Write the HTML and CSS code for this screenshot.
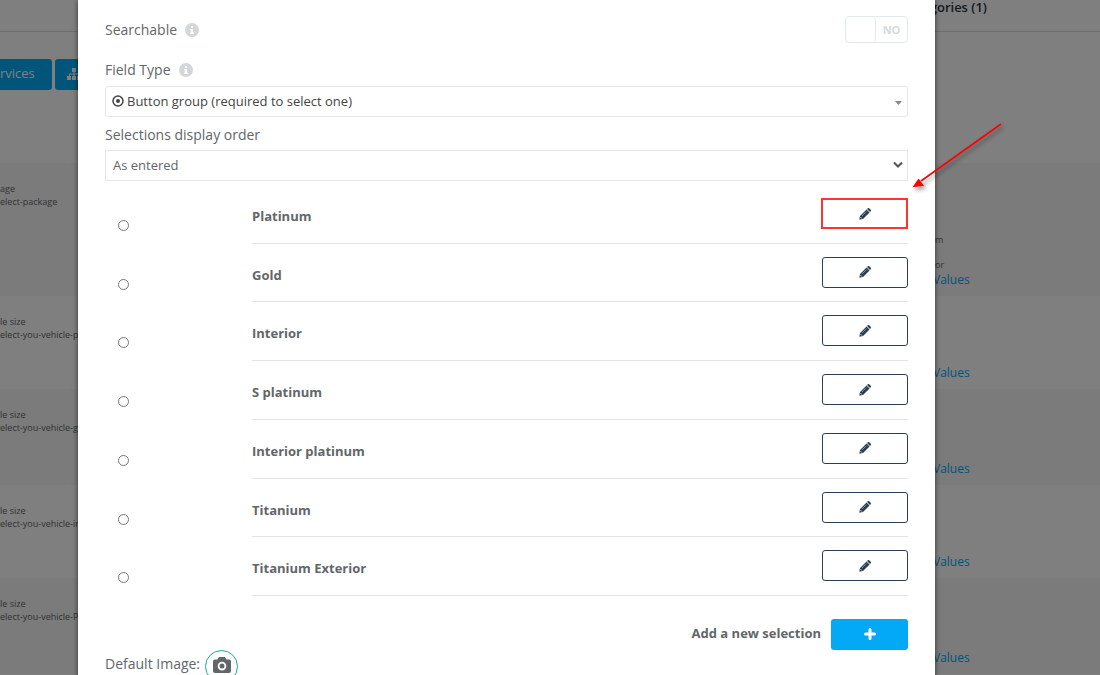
FILE: index.html
```
<!DOCTYPE html>
<html lang="en">
<head>
    <meta charset="UTF-8">
    <meta name="viewport" content="width=device-width, initial-scale=1.0">
    <title>Edit field</title>
    <link rel="stylesheet" href="styles.css">
</head>
<body>
    <svg class="sprite" aria-hidden="true">
        <symbol id="info" viewBox="0 0 14 14">
            <circle cx="7" cy="7" r="7" fill="#d3d7da"/>
            <path d="M6 3h2v2H6zM5 6h3v3.500h1V11H5V9.500h1v-2H5z" fill="#fff"/>
        </symbol>
        <symbol id="pencil" viewBox="0 0 12 12">
            <path d="M8 1 8.800.300q.700-.600 1.400 0l1.500 1.500q.600.700 0 1.400L11 4zM7.500 1.500l3 3L4 11 .300 11.700 1 8z" fill="#2c3e50"/>
            <path d="M3 7.900 7.200 3.700" stroke="#c9ced6" stroke-width=".6" fill="none"/>
            <path d="M1.500 9.200l1.300 1.300" stroke="#fff" stroke-width=".9" fill="none"/>
        </symbol>
    </svg>

    <div class="page">
        <header class="page-header"><span class="page-title">gories (1)</span></header>
        <div class="toolbar">
            <button type="button" class="tool services">rvices</button>
            <button type="button" class="tool" aria-label="Categories">
                <svg width="14" height="12" viewBox="0 0 14 12" fill="#fff"><path d="M5 0h4v4H7.600v1.500H12V8h2v4h-4V8h1V6.500H7.600V8H9v4H5V8h1.400V6.500H3V8h1v4H0V8h2V5.500h4.400V4H5z"/></svg>
            </button>
        </div>
        <div class="records">
            <div class="record tall">
                <p class="name">age<br>elect-package</p>
                <p class="values"><span>m</span><span>or</span><a href="#">Values</a></p>
            </div>
            <div class="record">
                <p class="name">le size<br>elect-you-vehicle-pl</p>
                <p class="values"><a href="#">Values</a></p>
            </div>
            <div class="record">
                <p class="name">le size<br>elect-you-vehicle-gr</p>
                <p class="values"><a href="#">Values</a></p>
            </div>
            <div class="record">
                <p class="name">le size<br>elect-you-vehicle-in</p>
                <p class="values"><a href="#">Values</a></p>
            </div>
            <div class="record">
                <p class="name">le size<br>elect-you-vehicle-Pl</p>
                <p class="values"><a href="#">Values</a></p>
            </div>
        </div>
    </div>

    <div class="overlay">
        <form class="modal">
            <div class="switch-row">
                <label for="searchable">Searchable</label>
                <svg class="info"><use href="#info"/></svg>
                <label class="switch">
                    <input type="checkbox" id="searchable">
                    <span class="knob"></span>
                    <span class="state">NO</span>
                </label>
            </div>

            <div class="field-label first">
                <label for="field-type">Field Type</label>
                <svg class="info"><use href="#info"/></svg>
            </div>
            <div class="select-box">
                <svg class="type-icon" viewBox="0 0 12 12"><circle cx="6" cy="6" r="5" fill="none" stroke="#444" stroke-width="1.500"/><circle cx="6" cy="6" r="2" fill="#444"/></svg>
                <select id="field-type" class="type-select">
                    <option>Button group (required to select one)</option>
                </select>
                <svg class="caret" viewBox="0 0 10 10"><path d="M2 4h7L5.500 8z" fill="#888"/></svg>
            </div>

            <div class="field-label">
                <label for="order">Selections display order</label>
            </div>
            <div class="select-box">
                <select id="order" class="order-select">
                    <option>As entered</option>
                </select>
                <svg class="caret" viewBox="0 0 10 10"><path d="M1 1.500 5 5.500l4-4" fill="none" stroke="#555" stroke-width="2"/></svg>
            </div>

            <div class="selections">
                <div class="selection">
                    <input type="radio" name="selection" id="s1">
                    <div class="selection-body">
                        <label for="s1">Platinum</label>
                        <button type="button" class="edit marked" aria-label="Edit Platinum"><svg><use href="#pencil"/></svg></button>
                    </div>
                </div>
                <div class="selection">
                    <input type="radio" name="selection" id="s2">
                    <div class="selection-body">
                        <label for="s2">Gold</label>
                        <button type="button" class="edit" aria-label="Edit Gold"><svg><use href="#pencil"/></svg></button>
                    </div>
                </div>
                <div class="selection">
                    <input type="radio" name="selection" id="s3">
                    <div class="selection-body">
                        <label for="s3">Interior</label>
                        <button type="button" class="edit" aria-label="Edit Interior"><svg><use href="#pencil"/></svg></button>
                    </div>
                </div>
                <div class="selection">
                    <input type="radio" name="selection" id="s4">
                    <div class="selection-body">
                        <label for="s4">S platinum</label>
                        <button type="button" class="edit" aria-label="Edit S platinum"><svg><use href="#pencil"/></svg></button>
                    </div>
                </div>
                <div class="selection">
                    <input type="radio" name="selection" id="s5">
                    <div class="selection-body">
                        <label for="s5">Interior platinum</label>
                        <button type="button" class="edit" aria-label="Edit Interior platinum"><svg><use href="#pencil"/></svg></button>
                    </div>
                </div>
                <div class="selection">
                    <input type="radio" name="selection" id="s6">
                    <div class="selection-body">
                        <label for="s6">Titanium</label>
                        <button type="button" class="edit" aria-label="Edit Titanium"><svg><use href="#pencil"/></svg></button>
                    </div>
                </div>
                <div class="selection">
                    <input type="radio" name="selection" id="s7">
                    <div class="selection-body">
                        <label for="s7">Titanium Exterior</label>
                        <button type="button" class="edit" aria-label="Edit Titanium Exterior"><svg><use href="#pencil"/></svg></button>
                    </div>
                </div>
            </div>

            <div class="add-row">
                <label for="add">Add a new selection</label>
                <button type="button" id="add" class="add" aria-label="Add a new selection">
                    <svg width="12" height="12" viewBox="0 0 12 12"><path d="M6 1.500v9M1.500 6h9" stroke="#fff" stroke-width="3" stroke-linecap="round"/></svg>
                </button>
            </div>

            <div class="image-row">
                <label for="image">Default Image:</label>
                <button type="button" id="image" class="camera" aria-label="Default Image">
                    <svg width="18" height="16" viewBox="0 0 18 16"><path fill="#636669" fill-rule="evenodd" d="M6 0h6l1.500 2.500H16q2 0 2 2V14q0 2-2 2H2q-2 0-2-2V4.500q0-2 2-2h2.500zM9 4.800a4.300 4.300 0 1 0 0 8.600 4.300 4.300 0 0 0 0-8.600zM9 6.600a2.500 2.500 0 1 1 0 5 2.500 2.500 0 0 1 0-5z"/></svg>
                </button>
            </div>
        </form>
    </div>

    <!-- arrow pointing at the first edit button -->
    <svg class="arrow" viewBox="0 0 100 76" aria-hidden="true">
        <path d="M92 4 12 61" stroke="#f00" stroke-width="1.600" fill="none"/>
        <path d="M3.500 67.300 9.500 58.500l5.500 7.300z" fill="#f00"/>
    </svg>
</body>
</html>
```
FILE: styles.css
```
* {
    box-sizing: border-box;
}
body {
    margin: 0;
    height: 100vh;
    overflow: hidden;
    position: relative;
    font-family: "Open Sans", sans-serif;
    font-size: 13px;
    color: #636669;
    background-color: #ffffff;
}
button, select, input {
    font-family: inherit;
    font-size: inherit;
    margin: 0;
}
.sprite {
    display: none;
}

/* page behind the dialog */
.page-header {
    display: flex;
    justify-content: flex-end;
    height: 32px;
    padding-right: 113px;
    border-bottom: 1px solid #d8d8d8;
}
.page-title {
    font-weight: 600;
    line-height: 14px;
    color: #2c3440;
}
.toolbar {
    display: flex;
    gap: 3px;
    padding: 27px 0 73px;
}
.tool {
    height: 31px;
    padding: 0 12px 2px;
    border: 0;
    border-radius: 3px;
    background-color: #03a9f4;
    color: #ffffff;
}
.tool svg {
    display: block;
}
.services {
    width: 52px;
    padding: 0 19px 3px 0;
    text-align: right;
    border-radius: 0 3px 3px 0;
}
.record {
    display: flex;
    justify-content: space-between;
    height: 93px;
    padding-top: 19px;
    font-size: 9px;
    line-height: 13px;
}
.record:nth-child(odd) {
    height: 96px;
    background-color: #f6f6f6;
}
.record.tall {
    height: 133px;
}
.record p {
    margin: 0;
}
.values {
    display: flex;
    flex-direction: column;
    justify-content: flex-end;
    width: 167px;
    padding-bottom: 7px;
}
.values span {
    padding: 0 2px 12px;
}
.values span + span {
    padding-bottom: 0;
}
.values a {
    font-size: 12px;
    line-height: 18px;
    color: #03a9f4;
    text-decoration: none;
}

/* dialog */
.overlay {
    position: absolute;
    inset: 0;
    padding: 0 165px 0 78px;
    background-color: rgba(0, 0, 0, 0.5);
}
.modal {
    padding: 16px 27px 20px;
    background-color: #ffffff;
    box-shadow: 0 0 5px rgba(0, 0, 0, 0.6);
}
.switch-row, .field-label, .image-row {
    display: flex;
    align-items: center;
    font-size: 14px;
}
.switch-row, .field-label {
    gap: 8px;
}
.info {
    width: 14px;
    height: 14px;
}
.switch {
    display: flex;
    width: 63px;
    height: 27px;
    margin-left: auto;
    border: 1px solid #e4eaec;
    border-radius: 4px;
    font-size: 11px;
    font-weight: bold;
    line-height: 25px;
    color: #d5dade;
}
.switch input {
    position: absolute;
    opacity: 0;
}
.knob {
    width: 30px;
    border-right: 1px solid #e4eaec;
    border-radius: 4px;
}
.state {
    flex: 1;
    text-align: center;
}
.field-label {
    padding: 7px 0 4px;
    line-height: 22px;
}
.field-label.first {
    padding: 16px 0 5px;
}
.select-box {
    position: relative;
}
.select-box select {
    display: block;
    width: 100%;
    height: 31px;
    padding: 0 24px 2px 7px;
    border: 1px solid #e4e7ea;
    background-color: #ffffff;
    color: #636669;
    appearance: none;
}
.select-box .type-select {
    padding-left: 21px;
    border-radius: 3px;
    color: #444444;
}
.type-icon {
    position: absolute;
    top: 9px;
    left: 7px;
    width: 12px;
    height: 12px;
}
.caret {
    position: absolute;
    top: 11px;
    right: 5px;
    width: 10px;
    height: 10px;
}
.selections {
    display: flex;
    flex-direction: column;
    min-height: 411px;
    margin-top: 4px;
}
.selection {
    display: flex;
    flex: 1;
    padding-left: 12px;
}
.selection input {
    appearance: none;
    width: 11px;
    height: 11px;
    margin: 35px 123px 0 1px;
    border: 1px solid #767676;
    border-radius: 50%;
}
.selection-body {
    display: flex;
    flex: 1;
    justify-content: space-between;
    padding-top: 13px;
    border-bottom: 1px solid #e4e4e4;
}
.selection-body label, .add-row label {
    font-weight: bold;
}
.selection-body label {
    line-height: 36px;
}
.edit {
    display: flex;
    align-items: center;
    justify-content: center;
    width: 86px;
    height: 31px;
    padding: 0;
    border: 1px solid #2c3e50;
    border-radius: 3px;
    background-color: #ffffff;
}
.edit svg {
    width: 12px;
    height: 12px;
}
.edit.marked {
    width: 87px;
    border: 2px solid #f93535;
    border-radius: 0;
}
.add-row {
    display: flex;
    align-items: center;
    justify-content: flex-end;
    gap: 10px;
    margin-top: 23px;
}
.add-row label {
    padding-bottom: 4px;
}
.add {
    width: 77px;
    height: 31px;
    padding: 0 0 5px;
    border: 0;
    border-radius: 3px;
    background-color: #03a9f4;
}
.add svg {
    vertical-align: middle;
}
.image-row {
    gap: 5px;
}
.image-row label {
    padding-bottom: 6px;
}
.camera {
    display: flex;
    align-items: center;
    justify-content: center;
    width: 33px;
    height: 33px;
    padding: 0 0 3px;
    border: 1px solid #1aab8a;
    border-radius: 50%;
    background-color: #ffffff;
}
.arrow {
    position: absolute;
    top: 120px;
    right: 91px;
    width: 100px;
    height: 76px;
    filter: drop-shadow(2px 3px 2px rgba(0, 0, 0, 0.4));
}
```
